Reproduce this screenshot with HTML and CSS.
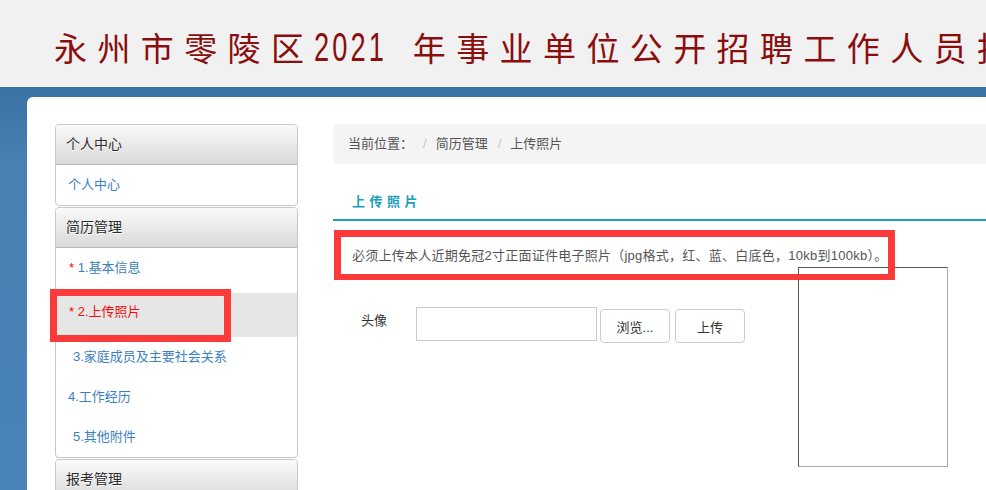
FILE: index.html
```html
<!DOCTYPE html>
<html lang="zh-CN">
<head>
<meta charset="utf-8">
<title>永州市零陵区2021年事业单位公开招聘工作人员报名系统</title>
<link rel="stylesheet" href="styles.css">
</head>
<body>
<header class="top">
  <h1 class="title">永州市零陵区<span class="yr">2021</span>年事业单位公开招聘工作人员报名系统</h1>
</header>
<div class="stage">
  <div class="panel">
    <aside class="side">
      <div class="box">
        <div class="box-hd">个人中心</div>
        <ul class="menu">
          <li class="it it-plain">个人中心</li>
        </ul>
      </div>
      <div class="box">
        <div class="box-hd">简历管理</div>
        <ul class="menu">
          <li class="it it-first"><span class="req">*</span> 1.基本信息</li>
          <li class="it it-active"><span class="req">*</span> 2.上传照片</li>
          <li class="it it-row it-in">3.家庭成员及主要社会关系</li>
          <li class="it it-row">4.工作经历</li>
          <li class="it it-row it-in">5.其他附件</li>
        </ul>
      </div>
      <div class="box">
        <div class="box-hd">报考管理</div>
      </div>
    </aside>
    <main class="main">
      <div class="crumb">
        <span>当前位置：</span><span class="sep">/</span><span>简历管理</span><span class="sep">/</span><span>上传照片</span>
      </div>
      <h2 class="sec">上传照片</h2>
      <p class="note">必须上传本人近期免冠2寸正面证件电子照片（jpg格式，红、蓝、白底色，10kb到100kb）。</p>
      <div class="upload">
        <div class="form-row">
          <span class="lbl">头像</span>
          <span class="field"></span>
          <button class="btn" type="button">浏览...</button>
          <button class="btn btn2" type="button">上传</button>
        </div>
        <div class="photo"></div>
      </div>
    </main>
    <div class="mark mark-side"></div>
    <div class="mark mark-note"></div>
  </div>
</div>
</body>
</html>
```
FILE: styles.css
```css
* { box-sizing: border-box; }
html, body { margin: 0; padding: 0; }
body {
  width: 986px;
  height: 490px;
  overflow: hidden;
  font-family: "Liberation Sans", "Noto Sans CJK SC", sans-serif;
  font-size: 13px;
  color: #333;
  background: #f1f1f1;
}

.top {
  height: 87px;
  background: #f1f1f1;
  padding: 31px 0 0 54px;
  overflow: hidden;
}
.title {
  margin: 0;
  font-family: "Noto Sans CJK SC", sans-serif;
  font-weight: 400;
  font-size: 33px;
  line-height: 33px;
  letter-spacing: 10.4px;
  color: #8a0e0e;
  white-space: nowrap;
}
.yr {
  display: inline-block;
  font-family: "Liberation Sans", sans-serif;
  font-size: 40px;
  line-height: 33px;
  letter-spacing: 4.6px;
  transform: scaleX(0.68);
  transform-origin: left center;
  margin-right: -9px;
}

.stage {
  height: 403px;
  padding: 10px 0 0 27px;
  background: linear-gradient(#3b72a5, #4981b5 80px, #4a83b7);
}
.panel {
  position: relative;
  height: 100%;
  background: #fff;
  border-top-left-radius: 6px;
  display: flex;
  align-items: flex-start;
  padding: 27px 0 0 28px;
  overflow: hidden;
}

.side {
  flex: 0 0 243px;
  width: 243px;
}
.box {
  border: 1px solid #c8c8c8;
  border-radius: 4px;
  margin-bottom: 1px;
  overflow: hidden;
}
.box-hd {
  height: 40px;
  line-height: 39px;
  padding-left: 10px;
  font-size: 14px;
  color: #2a2a2a;
  text-shadow: 0 1px 0 #fff;
  background: linear-gradient(#fafafa, #d9d9d9);
  border-bottom: 1px solid #b9b9b9;
}
.menu {
  list-style: none;
  margin: 0;
  padding: 0;
}
.it {
  color: #3b7fc0;
  padding-left: 12px;
  line-height: 20px;
}
.it-plain { height: 40px; line-height: 40px; }
.it-first { height: 45px; padding-top: 10px; padding-left: 13px; }
.it-active {
  height: 44px;
  padding-top: 9px;
  padding-left: 13px;
  background: #e6e6e6;
  color: #f01010;
}
.it-row { height: 40px; line-height: 40px; }
.it-in { padding-left: 17px; }
.req { color: #f00; }

.main {
  flex: 0 0 680px;
  margin-left: 35px;
}
.crumb {
  height: 40px;
  line-height: 40px;
  padding-left: 15px;
  background: #f4f4f4;
  border-radius: 4px;
  color: #555;
}
.sep {
  color: #c4c4c4;
  margin: 0 9px 0 10px;
}
.sec {
  margin: 28px 0 0;
  padding: 0 0 7px 19px;
  line-height: 20px;
  font-size: 13px;
  font-weight: 700;
  letter-spacing: 4.5px;
  color: #1aa1b9;
  border-bottom: 2px solid #16a3b8;
}
.note {
  margin: 25px 0 0;
  padding-left: 19px;
  line-height: 20px;
  letter-spacing: 0.25px;
  color: #555;
}
.upload {
  display: flex;
  align-items: flex-start;
  margin-top: 1px;
}
.form-row {
  flex: 0 0 465px;
  display: flex;
  align-items: flex-start;
  padding: 40px 0 0 28px;
}
.lbl {
  width: 55px;
  margin-top: 4px;
  line-height: 20px;
  color: #333;
}
.field {
  width: 181px;
  height: 34px;
  border: 1px solid #ccc;
  background: #fff;
}
.btn {
  width: 70px;
  height: 34px;
  margin: 2px 0 0 3px;
  border: 1px solid #ccc;
  border-radius: 4px;
  background: #fff;
  font-family: "Liberation Sans", "Noto Sans CJK SC", sans-serif;
  font-size: 13px;
  color: #333;
  padding: 0;
}
.btn2 { margin-left: 5px; }
.photo {
  width: 150px;
  height: 200px;
  border-top: 1px solid #555;
  border-left: 1px solid #555;
  border-right: 1px solid #a8a8a8;
  border-bottom: 1px solid #a8a8a8;
  background: #fff;
}

.mark {
  position: absolute;
  border: 7px solid #fd3a3a;
}
.mark-side {
  left: 23px;
  top: 192px;
  width: 181px;
  height: 53px;
}
.mark-note {
  left: 307px;
  top: 133px;
  width: 561px;
  height: 50px;
  border-bottom-width: 6px;
}
```
